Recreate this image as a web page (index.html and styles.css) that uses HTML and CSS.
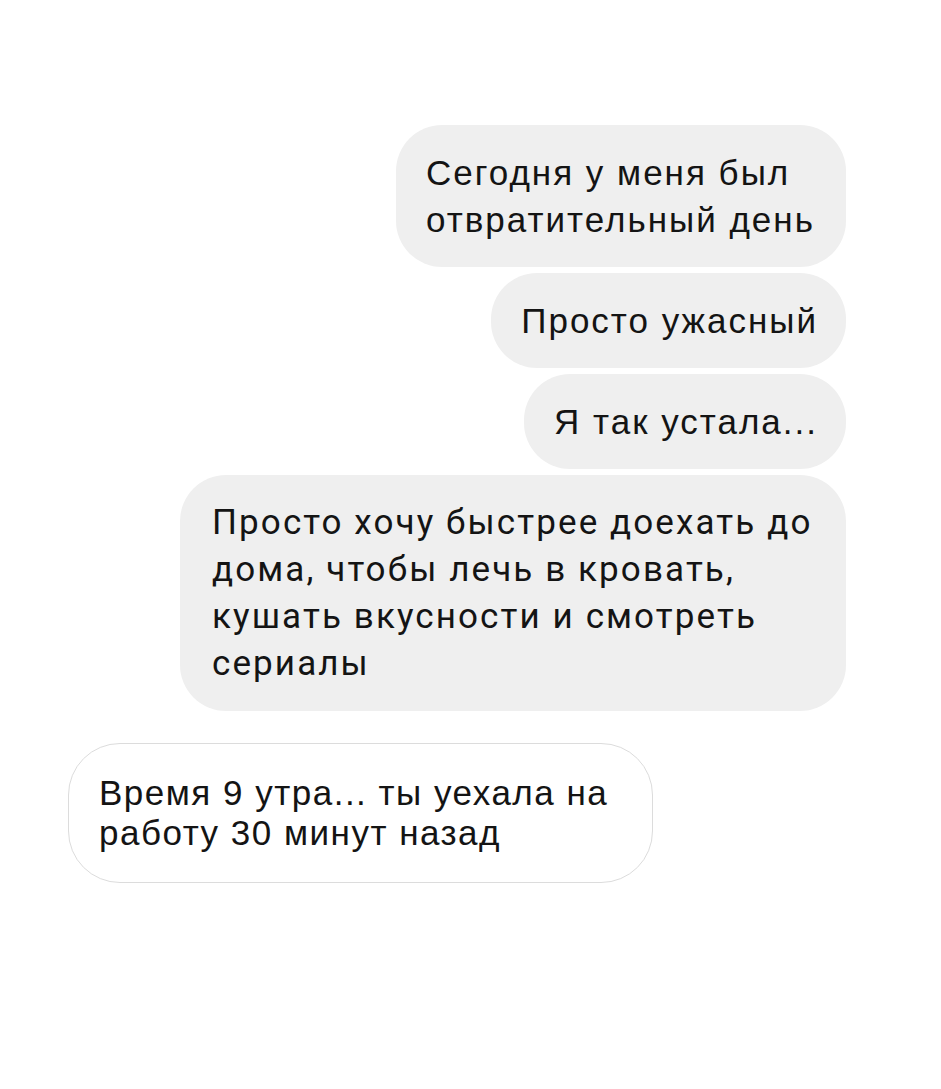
FILE: index.html
```
<!DOCTYPE html>
<html lang="ru">
<head>
  <meta charset="UTF-8" />
  <meta name="viewport" content="width=device-width, initial-scale=1.0"/>
  <title>Сообщения</title>
  <link rel="stylesheet" href="styles.css">
</head>
<body>

  <div class="chat">
    <div class="msg msg-out">Сегодня у меня был отвратительный день</div>
    <div class="msg msg-out">Просто ужасный</div>
    <div class="msg msg-out">Я так устала...</div>
    <div class="msg msg-out msg-long">Просто хочу быстрее доехать до дома, чтобы лечь в кровать, кушать вкусности и смотреть сериалы</div>

    <!-- reply from the other side -->
    <div class="msg msg-in">Время 9 утра... ты уехала на работу 30 минут назад</div>
  </div>

</body>
</html>
```

FILE: styles.css
```
body {
  margin: 0;
  background: #fff;
  font-family: 'Liberation Sans', Arial, sans-serif;
  color: #141414;
}

.chat {
  display: flex;
  flex-direction: column;
  gap: 6px;
  padding: 125px 95px 0 68px;
}

.msg {
  font-size: 35px;
  line-height: 47px;
  letter-spacing: 2px;
  padding: 24px 28px 24px 30px;
  border-radius: 46px;
  max-width: 392px;
}

.msg-out {
  align-self: flex-end;
  background: #efefef;
}

.msg-long {
  box-sizing: border-box;
  width: 666px;
  max-width: none;
  font-family: Roboto, sans-serif;
  letter-spacing: 2.1px;
  padding: 24px 30px 24px 32px;
}

.msg-in {
  align-self: flex-start;
  margin-top: 26px;
  max-width: 520px;
  line-height: 40px;
  letter-spacing: 1.5px;
  padding: 29px 33px 29px 30px;
  background: #fff;
  border: 1.5px solid #dcdcdc;
  border-radius: 52px;
}
```
